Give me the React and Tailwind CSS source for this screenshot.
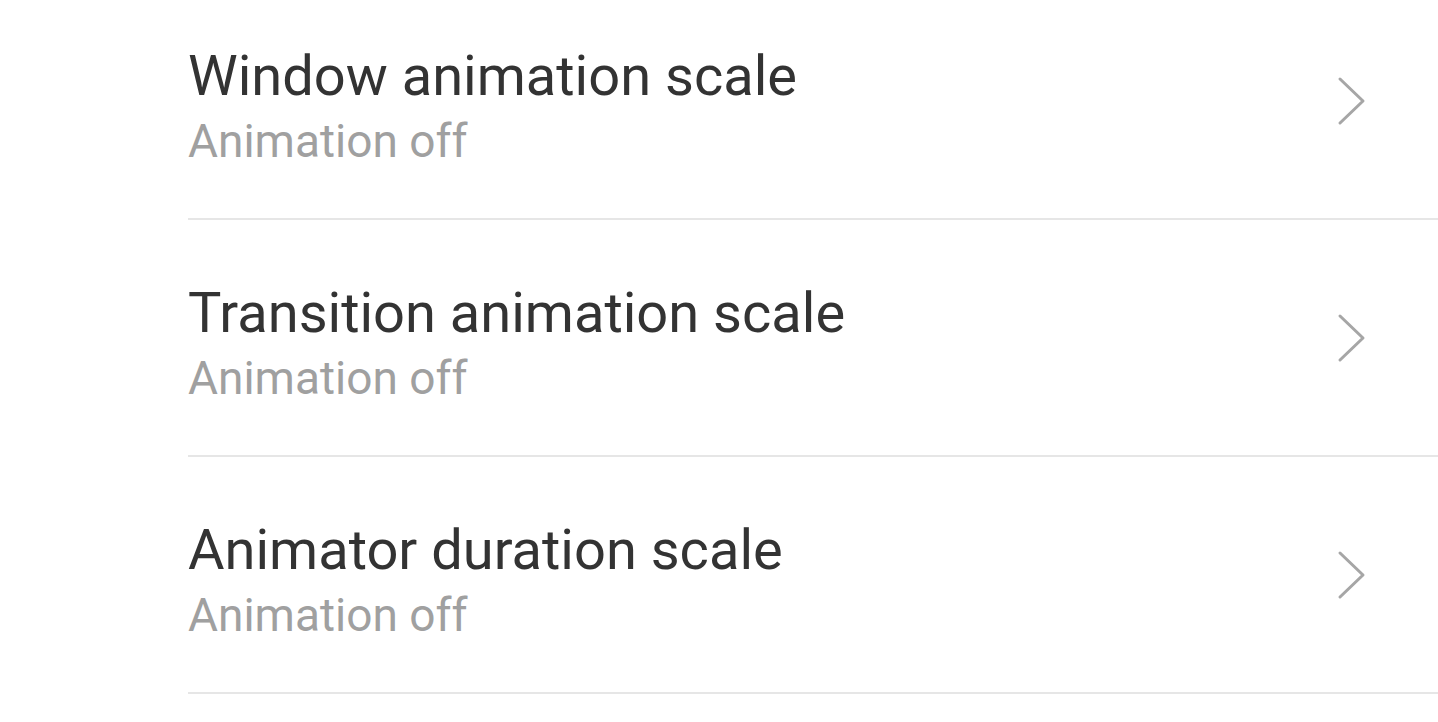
import React from 'react';

const rows = [
  { title: 'Window animation scale', value: 'Animation off' },
  { title: 'Transition animation scale', value: 'Animation off' },
  { title: 'Animator duration scale', value: 'Animation off' },
];

const Chevron = () => (
  <svg width="30" height="50" viewBox="0 0 30 50" fill="none" className="shrink-0">
    <path d="M4 3 L27 25 L4 47" stroke="#a6a6a6" strokeWidth="3" strokeLinecap="round" strokeLinejoin="round" />
  </svg>
);

export default function App() {
  return (
    <div className="w-[1438px] h-[722px] overflow-hidden bg-white" style={{ fontFamily: 'Roboto, sans-serif' }}>
      <div className="-mt-[17px] pl-[188px]">
        {rows.map((r) => (
          <div key={r.title} className="h-[237px] flex items-center border-b-2 border-[#e6e6e6] pr-[72px]">
            <div className="flex-1 flex flex-col pt-[14px]">
              <div className="text-[56px] leading-[68px] text-[#333333]">{r.title}</div>
              <div className="text-[46px] leading-[63px] text-[#a0a0a0]">{r.value}</div>
            </div>
            <Chevron />
          </div>
        ))}
      </div>
    </div>
  );
}
